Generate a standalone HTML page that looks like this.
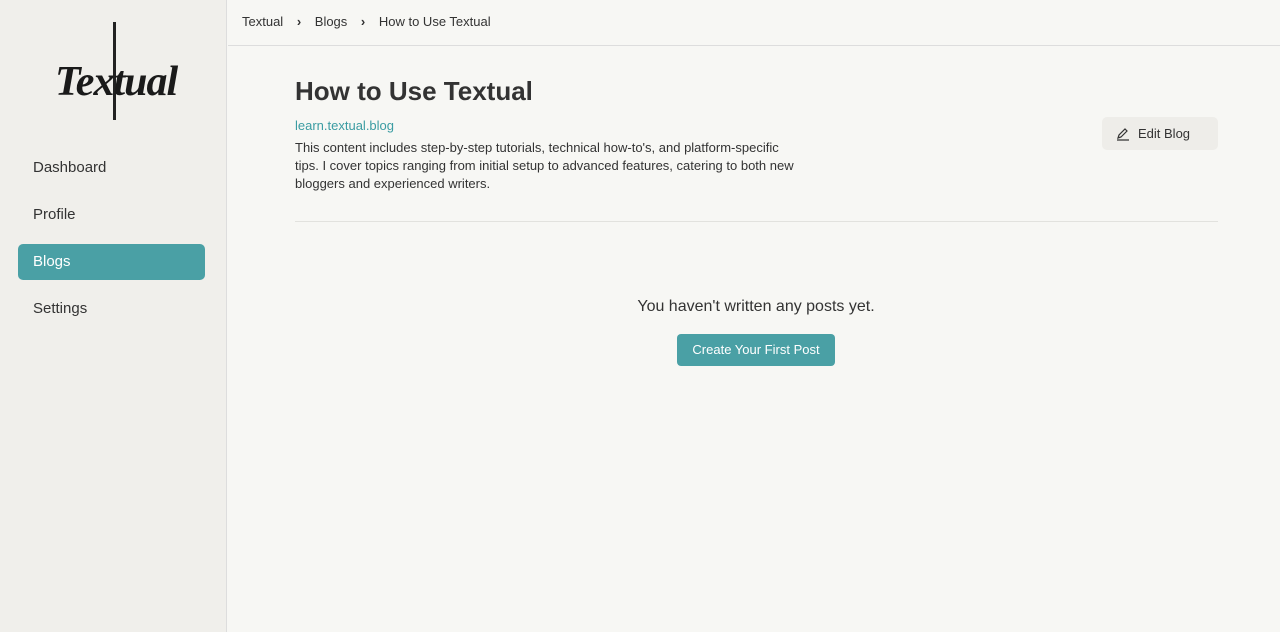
<!DOCTYPE html>
<html><head><style>
*{margin:0;padding:0;box-sizing:border-box}
body{width:1280px;height:632px;background:#f7f7f4;font-family:"Liberation Sans",sans-serif;color:#333;position:relative;overflow:hidden}
.side{position:absolute;left:0;top:0;width:227px;height:632px;background:#f0efeb;border-right:1px solid #ddd}
.nav{position:absolute;left:18px;width:187px;height:36px;border-radius:5px;font-size:15px;color:#333;padding-left:15px;line-height:36px}
.nav.a{background:#4aa0a5;color:#fff}
.top{position:absolute;left:228px;top:0;right:0;height:46px;border-bottom:1px solid #ddd;font-size:13px;line-height:43px;padding-left:14px;color:#333}
.t{position:absolute}
</style></head><body>
<div class="side">
<div class="t" style="left:45px;top:22px;width:140px;height:100px">
<div style="position:absolute;left:68px;top:0;width:3px;height:98px;background:#222"></div>
<div style="position:absolute;left:10px;top:36px;font:bold 42px 'Liberation Serif',serif;color:#1a1a1a;letter-spacing:-1px;font-style:italic">Textual</div>
</div>
<div class="nav" style="top:150px">Dashboard</div>
<div class="nav" style="top:197px">Profile</div>
<div class="nav a" style="top:244px">Blogs</div>
<div class="nav" style="top:291px">Settings</div>
</div>
<div class="top">Textual <span style="margin:0 10px;font-weight:bold">›</span> Blogs <span style="margin:0 10px;font-weight:bold">›</span> How to Use Textual</div>
<div class="t" style="left:295px;top:76px;font-size:26px;font-weight:bold;color:#333">How to Use Textual</div>
<div class="t" style="left:295px;top:118px;font-size:13px;color:#3b9ca2">learn.textual.blog</div>
<div class="t" style="left:295px;top:139px;width:508px;font-size:13px;line-height:18px;color:#333">This content includes step-by-step tutorials, technical how-to's, and platform-specific tips. I cover topics ranging from initial setup to advanced features, catering to both new bloggers and experienced writers.</div>
<div class="t" style="left:1102px;top:117px;width:116px;height:33px;background:#eeede9;border-radius:5px;font-size:13px;line-height:33px;padding-left:36px;color:#333">Edit Blog
<svg style="position:absolute;left:14px;top:10px" width="14" height="14" viewBox="0 0 14 14" fill="none" stroke="#333" stroke-width="1.2"><path d="M2 11l1-3 6-6 2 2-6 6-3 1zM1 13h12"/></svg></div>
<div class="t" style="left:295px;top:221px;width:923px;height:1px;background:#e2e2de"></div>
<div class="t" style="left:0;width:1512px;top:298px;text-align:center;font-size:16px;color:#333">You haven't written any posts yet.</div>
<div class="t" style="left:677px;top:334px;width:158px;height:32px;background:#4aa0a5;border-radius:4px;color:#fff;font-size:13px;text-align:center;line-height:32px">Create Your First Post</div>
</body></html>
